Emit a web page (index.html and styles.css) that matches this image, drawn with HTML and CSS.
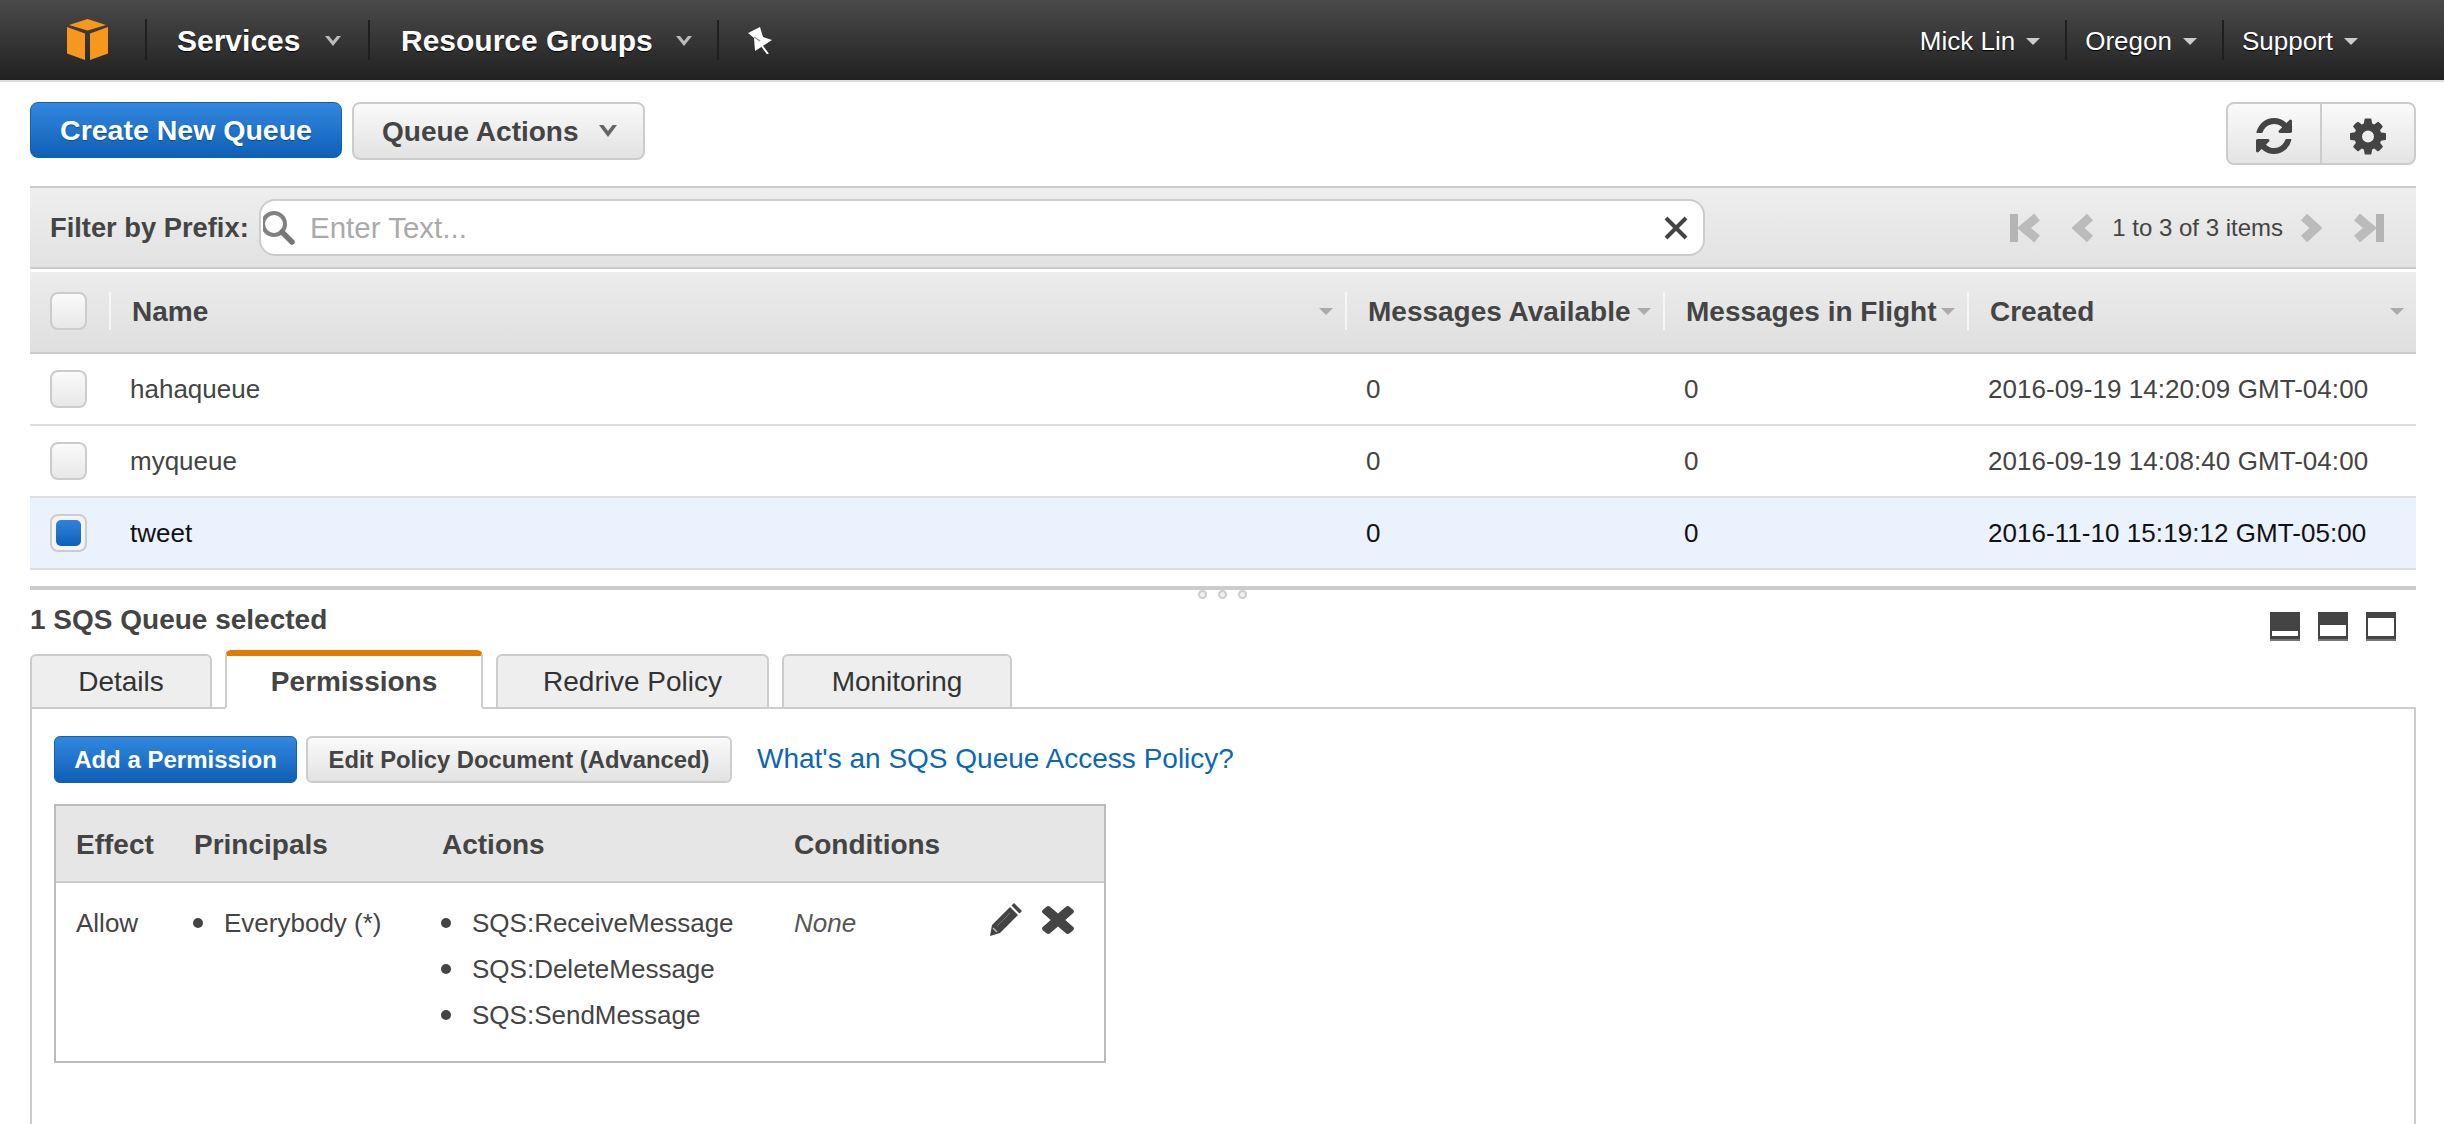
FILE: index.html
```html
<!DOCTYPE html>
<html lang="en">
<head>
<meta charset="utf-8">
<title>SQS</title>
<link rel="stylesheet" href="styles.css">
</head>
<body>
<nav class="nav">
  <div class="nav-logo">
    <svg width="41" height="41" viewBox="0 0 41 41"><path d="M2 6 20.500 0 39 6 20.500 11.500Z" fill="#f7981d"/><path d="M0 8 18 14.500V41L0 34.500Z" fill="#f7981d"/><path d="M41 8 23 14.500V41L41 34.500Z" fill="#f7981d"/></svg>
  </div>
  <div class="nav-item nav-services"><span>Services</span><svg class="chev" width="18" height="12" viewBox="0 0 18 12"><path d="M1 1 9 11 17 1 13 1 9 6 5 1Z" fill="#bbb"/></svg></div>
  <div class="nav-item nav-groups"><span>Resource Groups</span><svg class="chev" width="18" height="12" viewBox="0 0 18 12"><path d="M1 1 9 11 17 1 13 1 9 6 5 1Z" fill="#bbb"/></svg></div>
  <div class="nav-pin">
    <svg width="26" height="28" viewBox="0 0 26 28"><path d="M1 7 13 1 16 11 25 14 8 25 7 12Z" fill="#fff"/><path d="M15 20 21 28" stroke="#fff" stroke-width="2"/><path d="M7 11 13 15" stroke="#999" stroke-width="1.500"/></svg>
  </div>
  <div class="nav-right">
    <div class="nav-link"><span>Mick Lin</span><i class="tri tri-light"></i></div>
    <div class="nav-link"><span>Oregon</span><i class="tri tri-light"></i></div>
    <div class="nav-link nav-last"><span>Support</span><i class="tri tri-light"></i></div>
  </div>
</nav>

<main class="main">
  <div class="toolbar">
    <button class="btn-primary">Create New Queue</button>
    <button class="btn-actions">Queue Actions<svg class="chev-dark" width="20" height="14" viewBox="0 0 20 14"><path d="M1 1 10 13 19 1 14.500 1 10 7 5.500 1Z" fill="#666"/></svg></button>
    <div class="tool-group">
      <div class="tool">
        <svg width="36" height="36" viewBox="128 128 1536 1536"><path fill="#444" d="M1639 1056q0 5-1 7-64 268-268 434.500t-478 166.500q-146 0-282.500-55t-243.500-157l-129 129q-19 19-45 19t-45-19-19-45v-448q0-26 19-45t45-19h448q26 0 45 19t19 45-19 45l-137 137q71 66 161 102t187 36q134 0 250-65t186-179q11-17 53-117 8-23 30-23h192q13 0 22.500 9.500t9.500 22.500zm25-800v448q0 26-19 45t-45 19h-448q-26 0-45-19t-19-45 19-45l138-138q-148-137-349-137-134 0-250 65t-186 179q-11 17-53 117-8 23-30 23h-199q-13 0-22.500-9.500t-9.500-22.500v-7q65-268 270-434.500t480-166.500q146 0 284 55.500t245 156.500l130-129q19-19 45-19t45 19 19 45z"/></svg>
      </div>
      <div class="tool tool-last">
        <svg width="36" height="37" viewBox="128 128 1536 1536"><path fill="#444" d="M1152 896q0-106-75-181t-181-75-181 75-75 181 75 181 181 75 181-75 75-181zm512-109v222q0 12-8 23t-20 13l-185 28q-19 54-39 91 35 50 107 138 10 12 10 25t-9 23q-27 37-99 108t-94 71q-12 0-26-9l-138-108q-44 23-91 38-16 136-29 186-7 28-36 28h-222q-14 0-24.500-8.500t-11.500-21.500l-28-184q-49-16-90-37l-141 107q-10 9-25 9-14 0-25-11-126-114-165-168-7-10-7-23 0-12 8-23 15-21 51-66.500t54-70.500q-27-50-41-99l-183-27q-13-2-21-12.500t-8-23.500v-222q0-12 8-23t19-13l186-28q14-46 39-92-40-57-107-138-10-12-10-24 0-10 9-23 26-36 98.500-107.500t94.500-71.500q13 0 26 10l138 107q44-23 91-38 16-136 29-186 7-28 36-28h222q14 0 24.500 8.500t11.500 21.500l28 184q49 16 90 37l142-107q9-9 24-9 13 0 25 10 129 119 165 170 7 8 7 22 0 12-8 23-15 21-51 66.500t-54 70.500q26 50 41 98l183 28q13 2 21 12.500t8 23.500z"/></svg>
      </div>
    </div>
  </div>

  <div class="filter">
    <label class="filter-label">Filter by Prefix:</label>
    <div class="search">
      <svg class="search-icon" width="36" height="36" viewBox="0 0 36 36"><circle cx="11" cy="14" r="11" fill="none" stroke="#808080" stroke-width="4"/><path d="M19 22 29 32" stroke="#777" stroke-width="5.500" stroke-linecap="round"/></svg>
      <span class="placeholder">Enter Text...</span>
      <svg class="search-x" width="26" height="26" viewBox="0 0 26 26"><path d="M3 3 23 23M23 3 3 23" stroke="#444" stroke-width="4"/></svg>
    </div>
    <div class="pager">
      <svg width="32" height="30" viewBox="0 0 32 30"><rect x="0" y="1" width="8" height="28" fill="#b4b4b4"/><path d="M27 4 14 15 27 26" fill="none" stroke="#bbb" stroke-width="9"/></svg>
      <svg class="pg-prev" width="22" height="30" viewBox="0 0 22 30"><path d="M18 4 6 15 18 26" fill="none" stroke="#bbb" stroke-width="9"/></svg>
      <span class="pg-text">1 to 3 of 3 items</span>
      <svg class="pg-next" width="22" height="30" viewBox="0 0 22 30"><path d="M4 4 16 15 4 26" fill="none" stroke="#bbb" stroke-width="9"/></svg>
      <svg class="pg-last" width="32" height="30" viewBox="0 0 32 30"><path d="M5 4 18 15 5 26" fill="none" stroke="#bbb" stroke-width="9"/><rect x="24" y="1" width="8" height="28" fill="#b4b4b4"/></svg>
    </div>
  </div>

  <div class="grid grid-head">
    <div class="hcell hcell-check"><span class="check"></span></div>
    <div class="hcell"><span>Name</span><i class="tri tri-gray"></i></div>
    <div class="hcell"><span>Messages Available</span><i class="tri tri-gray"></i></div>
    <div class="hcell"><span>Messages in Flight</span><i class="tri tri-gray"></i></div>
    <div class="hcell"><span>Created</span><i class="tri tri-gray"></i></div>
  </div>
  <div class="grid grid-row">
    <div class="cell-check"><span class="check"></span></div>
    <div class="cell-name">hahaqueue</div>
    <div class="cell-num">0</div>
    <div class="cell-num">0</div>
    <div class="cell-date">2016-09-19 14:20:09 GMT-04:00</div>
  </div>
  <div class="grid grid-row">
    <div class="cell-check"><span class="check"></span></div>
    <div class="cell-name">myqueue</div>
    <div class="cell-num">0</div>
    <div class="cell-num">0</div>
    <div class="cell-date">2016-09-19 14:08:40 GMT-04:00</div>
  </div>
  <div class="grid grid-row grid-selected">
    <div class="cell-check"><span class="check check-on"></span></div>
    <div class="cell-name">tweet</div>
    <div class="cell-num">0</div>
    <div class="cell-num">0</div>
    <div class="cell-date">2016-11-10 15:19:12 GMT-05:00</div>
  </div>

  <div class="splitter">
    <div class="grip"><i></i><i></i><i></i></div>
  </div>

  <div class="selected-bar">
    <div class="selected-title">1 SQS Queue selected</div>
    <div class="panes">
      <span class="pane pane-s"></span>
      <span class="pane pane-m"></span>
      <span class="pane pane-l"></span>
    </div>
  </div>

  <div class="tabs">
    <div class="tab tab-details">Details</div>
    <div class="tab tab-active">Permissions</div>
    <div class="tab tab-redrive">Redrive Policy</div>
    <div class="tab tab-monitor">Monitoring</div>
  </div>

  <section class="panel">
    <div class="panel-actions">
      <button class="btn-add">Add a Permission</button>
      <button class="btn-edit">Edit Policy Document (Advanced)</button>
      <a class="policy-link" href="#">What's an SQS Queue Access Policy?</a>
    </div>
    <div class="perm">
      <div class="perm-head">
        <div class="col-effect">Effect</div>
        <div class="col-principals">Principals</div>
        <div class="col-actions">Actions</div>
        <div class="col-conditions">Conditions</div>
      </div>
      <div class="perm-body">
        <div class="col-effect"><div class="line">Allow</div></div>
        <ul class="col-principals list"><li>Everybody (*)</li></ul>
        <ul class="col-actions list"><li>SQS:ReceiveMessage</li><li>SQS:DeleteMessage</li><li>SQS:SendMessage</li></ul>
        <div class="col-conditions"><div class="line none">None</div></div>
        <div class="perm-icons">
          <svg width="32" height="33" viewBox="0 0 32 33"><path fill="#444" d="M24 0 32 8 29.500 10.500 21.500 2.500ZM20 4 28 12 10 30 0 33 2 22Z"/><path d="M3 25 7 29" stroke="#bbb" stroke-width="1.500"/><path d="M7 23 20 10" stroke="#777" stroke-width="1"/></svg>
          <svg width="32" height="31" viewBox="302 238 1188 1316" preserveAspectRatio="none"><path fill="#444" d="M1490 1322q0 40-28 68l-136 136q-28 28-68 28t-68-28l-294-294-294 294q-28 28-68 28t-68-28l-136-136q-28-28-28-68t28-68l294-294-294-294q-28-28-28-68t28-68l136-136q28-28 68-28t68 28l294 294 294-294q28-28 68-28t68 28l136 136q28 28 28 68t-28 68l-294 294 294 294q28 28 28 68z"/></svg>
        </div>
      </div>
    </div>
  </section>
</main>
</body>
</html>
```
FILE: styles.css
```css
* { box-sizing: border-box; }
html, body { margin: 0; padding: 0; height: 1124px; overflow: hidden; background: #fff; }
body { font-family: "Liberation Sans", Arial, sans-serif; color: #444; }
button { font-family: inherit; cursor: pointer; }
i { display: block; }

/* top nav */
.nav { height: 82px; display: flex; align-items: flex-start; background: linear-gradient(#4a4a4a, #212121); border-bottom: 2px solid #ddd; color: #fff; }
.nav-logo { width: 147px; height: 41px; margin-top: 19px; padding-left: 67px; border-right: 2px solid #1f1f1f; display: flex; }
.nav-item { height: 40px; margin-top: 20px; padding-top: 2px; display: flex; align-items: center; font-size: 30px; font-weight: 700; border-right: 2px solid #1f1f1f; text-shadow: 0 1px 1px #000; }
.nav-services { width: 223px; padding-left: 30px; }
.nav-groups { width: 349px; padding-left: 31px; }
.chev { margin-left: 24px; }
.nav-groups .chev { margin-left: 22px; }
.nav-pin { margin-top: 26px; margin-left: 28px; }
.nav-right { margin-left: auto; margin-top: 20px; display: flex; height: 40px; font-size: 26px; }
.nav-link { display: flex; align-items: center; padding: 2px 25px 0 18px; border-right: 2px solid #1f1f1f; text-shadow: 0 1px 1px #000; }
.nav-last { border-right: 0; padding-right: 86px; }
.tri { width: 0; height: 0; margin-left: 11px; border-left: 7px solid transparent; border-right: 7px solid transparent; }
.tri-light { border-top: 7px solid #ccc; }
.tri-gray { border-top: 7px solid #aaa; }

/* main */
.main { padding: 20px 28px 0 30px; }
.toolbar { display: flex; align-items: flex-start; height: 84px; }
.btn-primary { width: 312px; height: 56px; border: 1px solid #1260b4; border-radius: 8px; background: linear-gradient(#3288de, #0f60b7); color: #fff; font-size: 28.500px; font-weight: 700; padding: 0; text-shadow: 0 1px 1px #0a4a90; }
.btn-actions { width: 293px; height: 58px; margin-left: 10px; display: flex; align-items: center; padding: 2px 0 0 28px; border: 2px solid #ccc; border-radius: 8px; background: linear-gradient(#fafafa, #e2e2e2); color: #444; font-size: 28px; font-weight: 700; }
.chev-dark { margin-left: 19px; margin-top: -2px; }
.tool-group { margin-left: auto; width: 190px; height: 63px; display: flex; border: 2px solid #ccc; border-radius: 8px; background: linear-gradient(#fafafa, #e4e4e4); }
.tool { width: 94px; padding-top: 5px; display: flex; align-items: center; justify-content: center; border-right: 2px solid #ccc; }
.tool-last { flex: 1; border-right: 0; }

/* filter */
.filter { height: 83px; display: flex; align-items: center; background: linear-gradient(#eee, #e2e2e2); border-top: 2px solid #ccc; border-bottom: 2px solid #ccc; padding-left: 20px; }
.filter-label { font-size: 27.300px; font-weight: 700; width: 209px; flex: none; }
.search { width: 1446px; height: 57px; display: flex; align-items: center; background: #fff; border: 2px solid #ccc; border-radius: 16px; position: relative; padding-left: 2px; }
.search-icon { flex: none; }
.placeholder { margin-left: 11px; font-size: 29.500px; color: #aaa; }
.search-x { margin-left: auto; margin-right: 14px; }
.pager { margin-left: auto; margin-right: 32px; display: flex; align-items: center; }
.pg-prev { margin-left: 30px; }
.pg-text { margin-left: 18px; font-size: 24px; }
.pg-next { margin-left: 17px; }
.pg-last { margin-left: 30px; }

/* grid */
.grid { display: grid; grid-template-columns: 79px 1236px 318px 304px 1fr; }
.grid-head { margin-top: 3px; height: 82px; background: linear-gradient(#ececec, #dfdfdf); border-bottom: 2px solid #ccc; }
.hcell { display: flex; align-items: center; height: 38px; margin-top: 20px; padding: 1px 0 0 21px; border-left: 2px solid #f6f6f6; font-size: 28px; font-weight: 700; position: relative; }
.hcell .tri { position: absolute; right: 12px; top: 16px; margin: 0; }
.hcell-check { border-left: 0; padding: 0 0 0 20px; }
.check { display: block; width: 37px; height: 38px; border: 2px solid #ccc; border-radius: 8px; background: linear-gradient(#fafafa, #e8e8e8); padding: 4px; }
.check-on { background: #f4f4f4; }
.check-on::after { content: ""; display: block; height: 100%; border-radius: 5px; background: linear-gradient(#3083dc, #0f60b7); }
.grid-row { height: 72px; align-items: center; border-bottom: 2px solid #ddd; font-size: 26px; }
.cell-check { padding-left: 20px; }
.cell-name { padding-left: 21px; }
.cell-num { padding-left: 21px; }
.cell-date { padding-left: 21px; white-space: nowrap; letter-spacing: .05px; }
.grid-selected { background: #eaf2fd; color: #111; }

/* splitter */
.splitter { margin-top: 16px; height: 4px; background: #ccc; position: relative; }
.grip { position: absolute; left: 1168px; top: 4px; display: flex; gap: 11px; }
.grip i { width: 9px; height: 9px; border: 2px solid #ccc; border-radius: 50%; background: #eee; }

.selected-bar { display: flex; justify-content: space-between; align-items: flex-start; height: 46px; margin-top: 14px; }
.selected-title { font-size: 28px; font-weight: 700; line-height: 32px; }
.panes { display: flex; gap: 18px; margin-right: 20px; margin-top: 8px; }
.pane { width: 30px; height: 29px; background: #444; border-bottom: 2px solid #777; display: flex; align-items: flex-end; padding: 0 2px 3px; }
.pane::after { content: ""; display: block; width: 100%; background: #fff; }
.pane-s::after { height: 5px; }
.pane-m::after { height: 11px; }
.pane-l::after { height: 18px; }

/* tabs */
.tabs { display: flex; align-items: flex-end; gap: 13px; height: 59px; position: relative; z-index: 1; margin-bottom: -2px; }
.tab { height: 55px; display: flex; align-items: center; justify-content: center; background: #eee; border: 2px solid #ccc; border-radius: 6px 6px 0 0; font-size: 28px; color: #333; }
.tab-details { width: 182px; }
.tab-active { width: 258px; height: 59px; background: #fff; border-top: 6px solid #e07b00; border-bottom-color: #fff; font-weight: 700; color: #444; }
.tab-redrive { width: 273px; }
.tab-monitor { width: 230px; }

/* panel */
.panel { height: 420px; border: 2px solid #ccc; border-bottom: 0; padding: 27px 22px 0; }
.panel-actions { display: flex; align-items: center; height: 47px; }
.btn-add { width: 243px; height: 47px; padding: 0; border: 1px solid #1260b4; border-radius: 6px; background: linear-gradient(#3288de, #0f60b7); color: #fff; font-size: 24px; font-weight: 700; }
.btn-edit { width: 426px; height: 47px; margin-left: 9px; padding: 0; border: 2px solid #ccc; border-radius: 6px; background: linear-gradient(#fafafa, #e2e2e2); color: #444; font-size: 23.800px; font-weight: 700; }
.policy-link { margin-left: 25px; margin-top: -2px; color: #0b67b7; font-size: 28px; text-decoration: none; }
.perm { width: 1052px; height: 259px; margin-top: 21px; border: 2px solid #bbb; }
.perm-head { height: 77px; padding-top: 2px; display: flex; align-items: center; background: #e6e6e6; border-bottom: 2px solid #ccc; font-size: 28px; font-weight: 700; }
.col-effect { width: 120px; padding-left: 20px; flex: none; }
.col-principals { width: 248px; flex: none; padding-left: 18px; }
.col-actions { width: 352px; flex: none; padding-left: 18px; }
.col-conditions { width: 190px; flex: none; padding-left: 18px; }
.perm-body { position: relative; display: flex; align-items: flex-start; padding-top: 17px; font-size: 26px; }
.line { line-height: 46px; }
.none { font-style: italic; color: #555; }
.list { margin: 0; list-style: none; }
.list li { line-height: 46px; position: relative; padding-left: 30px; white-space: nowrap; }
.list li::before { content: ""; position: absolute; left: -1px; top: 18px; width: 10px; height: 10px; border-radius: 50%; background: #444; }
.perm-icons { display: flex; align-items: flex-start; gap: 20px; position: absolute; left: 934px; top: 20px; }
```
